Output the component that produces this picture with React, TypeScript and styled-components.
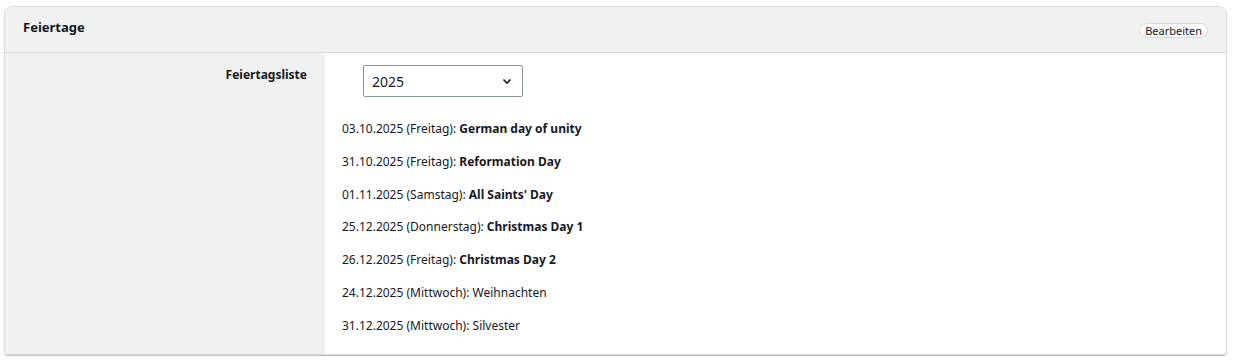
import styled, { createGlobalStyle } from "styled-components";

const GlobalStyle = createGlobalStyle`
  body {
    margin: 0;
    background: #fff;
    font-family: "Noto Sans", "Open Sans", Arial, sans-serif;
    color: #16191f;
  }
`;

const Page = styled.div`
  padding: 6px 7px 6px 4px;
`;

const Card = styled.div`
  border: 1px solid #d5dbdb;
  border-radius: 8px 8px 4px 4px;
  box-shadow: 0 1px 1px 0 rgba(0, 28, 36, 0.3);
  overflow: hidden;
`;

const Header = styled.div`
  height: 46px;
  background: #f0f1f1;
  border-bottom: 1px solid #d5dbdb;
  display: flex;
  align-items: flex-start;
  justify-content: space-between;
  padding: 11px 18px 0 18px;
  box-sizing: border-box;
  h2 {
    margin: 0;
    font-size: 13px;
    line-height: 18px;
    font-weight: 700;
  }
`;

const EditButton = styled.button`
  all: unset;
  margin-top: 5px;
  font-family: inherit;
  font-size: 11px;
  line-height: 13px;
  color: #16191f;
  padding: 0 5px;
  border: 1px solid #d5dbdb;
  border-radius: 8px;
  background: #fafafa;
  cursor: pointer;
`;

const Body = styled.div`
  display: grid;
  grid-template-columns: 320px 1fr;
`;

const Label = styled.div`
  background: #f0f1f1;
  text-align: right;
  padding: 13px 18px 0 0;
  font-size: 12px;
  line-height: 17px;
  font-weight: 700;
`;

const Content = styled.div`
  padding: 12px 0 19px 17px;
`;

const Select = styled.div`
  margin-left: 21px;
  width: 160px;
  height: 32px;
  border: 1px solid #879596;
  border-radius: 2px;
  display: flex;
  align-items: center;
  justify-content: space-between;
  padding: 0 9px 0 8px;
  box-sizing: border-box;
  font-size: 14px;
  margin-bottom: 23px;
`;

const List = styled.ul`
  list-style: none;
  margin: 0;
  padding: 0;
  display: flex;
  flex-direction: column;
  gap: 14.8px;
`;

const Item = styled.li<{ $bold?: boolean }>`
  font-size: 12px;
  line-height: 18px;
  b {
    font-weight: ${(p) => (p.$bold ? 700 : 400)};
  }
`;

const holidays = [
  { date: "03.10.2025", day: "Freitag", name: "German day of unity", bold: true },
  { date: "31.10.2025", day: "Freitag", name: "Reformation Day", bold: true },
  { date: "01.11.2025", day: "Samstag", name: "All Saints' Day", bold: true },
  { date: "25.12.2025", day: "Donnerstag", name: "Christmas Day 1", bold: true },
  { date: "26.12.2025", day: "Freitag", name: "Christmas Day 2", bold: true },
  { date: "24.12.2025", day: "Mittwoch", name: "Weihnachten", bold: false },
  { date: "31.12.2025", day: "Mittwoch", name: "Silvester", bold: false },
];

const App = () => {
  return (
    <Page>
      <GlobalStyle />
      <Card>
        <Header>
          <h2>Feiertage</h2>
          <EditButton>Bearbeiten</EditButton>
        </Header>
        <Body>
          <Label>Feiertagsliste</Label>
          <Content>
            <Select>
              <span>2025</span>
              <svg width="12" height="12" viewBox="0 0 12 12" fill="none">
                <path d="M2.5 4.5 6 8l3.5-3.5" stroke="#16191f" strokeWidth="1.6" />
              </svg>
            </Select>
            <List>
              {holidays.map((h) => (
                <Item key={h.date + h.name} $bold={h.bold}>
                  {h.date} ({h.day}): <b>{h.name}</b>
                </Item>
              ))}
            </List>
          </Content>
        </Body>
      </Card>
    </Page>
  );
};

export default App;
